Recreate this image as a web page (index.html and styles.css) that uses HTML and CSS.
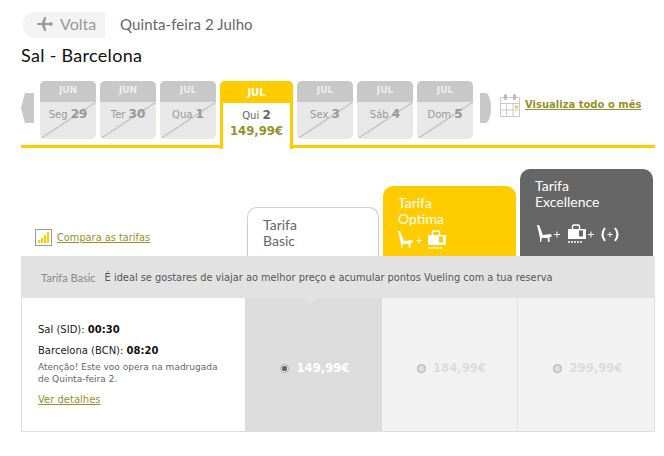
FILE: index.html
```html
<!DOCTYPE html>
<html lang="en">
<head>
    <meta charset="UTF-8">
    <meta name="viewport" content="width=device-width, initial-scale=1.0">
    <title>Sal - Barcelona</title>
    <link rel="stylesheet" href="styles.css">
</head>
<body>

<div class="top-row">
    <a class="back-btn">
        <svg class="plane" width="17" height="16" viewBox="0 0 19 16"><path d="M0 8 L2 5.5 L4 7 L9 7 L7.5 0.5 L10 0.5 L12.5 7 L17 7 Q19 8 17 9 L12.5 9 L10 15.5 L7.5 15.5 L9 9 L4 9 L2 10.5 Z" transform="rotate(180 9.5 8)" fill="#999"/></svg>
        <span>Volta</span>
    </a>
    <span class="top-date">Quinta-feira 2 Julho</span>
</div>

<h1 class="route">Sal - Barcelona</h1>

<div class="date-strip">
    <div class="arrow-left"></div>
    <div class="day"><div class="day-month">JUN</div><div class="day-body">Seg <b>29</b></div></div>
    <div class="day"><div class="day-month">JUN</div><div class="day-body">Ter <b>30</b></div></div>
    <div class="day"><div class="day-month">JUL</div><div class="day-body">Qua <b>1</b></div></div>
    <div class="day-active">
        <div class="day-active-month">JUL</div>
        <div class="day-active-body">Qui <b>2</b><div class="day-price">149,99€</div></div>
    </div>
    <div class="day"><div class="day-month">JUL</div><div class="day-body">Sex <b>3</b></div></div>
    <div class="day"><div class="day-month">JUL</div><div class="day-body">Sáb <b>4</b></div></div>
    <div class="day"><div class="day-month">JUL</div><div class="day-body">Dom <b>5</b></div></div>
    <div class="arrow-right"></div>
    <svg class="cal-icon" width="20" height="24" viewBox="0 0 20 24">
        <path d="M0.5 4.5H19.5V23.5H0.5ZM0.5 10.5H19.5M0.5 17H19.5M6.5 10.5V23.5M13 10.5V23.5" fill="none" stroke="#c9c9c9"/>
        <rect x="4" y="1" width="3" height="6" rx="1.5" fill="#bbb"/>
        <rect x="13" y="1" width="3" height="6" rx="1.5" fill="#bbb"/>
        <rect x="15" y="12.5" width="3" height="3" fill="#e3cf3a"/>
    </svg>
    <a class="month-link">Visualiza todo o mês</a>
</div>

<div class="fare-tabs">
    <a class="compare">
        <svg width="17" height="17" viewBox="0 0 17 17">
            <rect x="0.5" y="0.5" width="16" height="16" fill="#fff" stroke="#999"/>
            <path d="M3 11h2v3H3zM6 9h2v5H6zM9 6h2v8H9zM12 3h2v11h-2z" fill="#fc0"/>
        </svg>
        <span>Compara as tarifas</span>
    </a>
    <div class="fare-tab tab-basic">Tarifa<br>Basic</div>
    <div class="fare-tab tab-optima">
        Tarifa<br>Optima
        <div class="tab-icons">
            <svg width="56" height="20" viewBox="0 0 56 20">
                <use href="#seat"/>
                <path d="M18 10.5h6M21 7.5v6" stroke="#fff"/>
                <use href="#bag" x="29"/>
            </svg>
        </div>
    </div>
    <div class="fare-tab tab-excellence">
        Tarifa<br>Excellence
        <div class="tab-icons">
            <svg width="88" height="20" viewBox="0 0 88 20">
                <use href="#seat"/>
                <path d="M17 10.5h6M20 7.5v6" stroke="#fff"/>
                <use href="#bag" x="30"/>
                <path d="M51 10.5h6M54 7.5v6" stroke="#fff"/>
                <path d="M68 4 Q63 10.5 68 17M78 4 Q83 10.5 78 17" fill="none" stroke="#fff" stroke-width="2"/>
                <path d="M70.5 10.5h5M73 8v5" stroke="#fff"/>
            </svg>
        </div>
    </div>
</div>

<div class="info-bar">
    <span class="info-name">Tarifa Basic</span>
    <span class="info-text">É ideal se gostares de viajar ao melhor preço e acumular pontos Vueling com a tua reserva</span>
</div>

<div class="flight-row">
    <div class="flight-info">
        <p class="flight-time">Sal (SID)<span class="colon">:</span> <b>00:30</b></p>
        <p class="flight-time flight-time-last">Barcelona (BCN)<span class="colon">:</span> <b>08:20</b></p>
        <p class="flight-note">Atenção! Este voo opera na madrugada<br>de Quinta-feira 2.</p>
        <a class="details">Ver detalhes</a>
    </div>
    <div class="price-cell cell-selected">
        <span class="radio radio-on"></span><span class="price">149,99€</span>
    </div>
    <div class="price-cell">
        <span class="radio"></span><span class="price">184,99€</span>
    </div>
    <div class="price-cell cell-last">
        <span class="radio"></span><span class="price">299,99€</span>
    </div>
</div>

<svg width="0" height="0" class="icon-defs">
    <defs>
        <g id="seat"><path d="M0 1 L2 1 L6 11 L14 10 L15 12.5 L12.5 13 L12.5 18 L11 18 L10.5 14 L5 14 L4 18 L3 18 L3 14 Z" fill="#fff"/></g>
        <g id="bag">
            <path d="M5.5 5 V2.5 Q5.5 1 7 1 H11 Q12.5 1 12.5 2.5 V5" fill="none" stroke="#fff" stroke-width="1.5"/>
            <rect x="1" y="5" width="18" height="10" fill="#fff"/>
            <rect x="12" y="6.5" width="4" height="6" fill="currentColor"/>
            <path d="M1 18h2M4 18h2M7 18h2M10 18h2M13 18h2" stroke="#fff" stroke-width="1.5"/>
        </g>
    </defs>
</svg>

</body>
</html>
```

FILE: styles.css
```css
body {
    margin: 0;
    padding: 12px 9px 0 21px;
    font-family: 'DejaVu Sans', Verdana, sans-serif;
    background-color: #fff;
    color: #333;
    width: 634px;
}

.top-row {
    display: flex;
    align-items: center;
    height: 26px;
}

.back-btn {
    display: flex;
    align-items: center;
    gap: 7px;
    width: 82px;
    height: 26px;
    margin-left: 2px;
    padding: 0 0 3px 13px;
    box-sizing: border-box;
    background-color: #f3f3f3;
    border-radius: 12px 0 0 12px;
    font-family: 'Lato', sans-serif;
    font-size: 16px;
    color: #999;
}

.top-date {
    margin: 0 0 3px 15px;
    font-family: 'Lato', sans-serif;
    font-size: 15px;
    letter-spacing: 0.1px;
    color: #666;
}

.route {
    margin: 5px 0 0;
    height: 24px;
    font-family: 'Lato', sans-serif;
    font-size: 18px;
    letter-spacing: 0.3px;
    line-height: 24px;
    font-weight: 400;
    color: #111;
}

.date-strip {
    display: flex;
    align-items: flex-start;
    gap: 4px;
    height: 64px;
    margin-top: 14px;
    border-bottom: 3px solid #fc0;
}

.arrow-left {
    width: 13px;
    height: 30px;
    margin: 12px 2px 0 0;
    background-color: #c8c8c8;
    clip-path: polygon(0 50%, 30% 0, 100% 0, 100% 100%, 30% 100%);
}

.arrow-right {
    width: 11px;
    height: 30px;
    margin: 12px 5px 0 3px;
    background-color: #c8c8c8;
    border-radius: 0 50% 50% 0 / 0 50% 50% 0;
}

.day {
    width: 56px;
    height: 58px;
    border-radius: 5px;
    overflow: hidden;
    background-color: #e8e8e8;
    text-align: center;
}

.day-month {
    height: 21px;
    background-color: #c8c8c8;
    color: #eee;
    font-size: 9px;
    font-weight: bold;
    line-height: 19px;
}

.day-body {
    height: 37px;
    padding-top: 5px;
    box-sizing: border-box;
    font-size: 10px;
    color: #999;
    background: linear-gradient(to bottom right, transparent 48.5%, #ccc 48.5%, #ccc 51.5%, transparent 51.5%);
}

.day-body b {
    font-size: 12px;
}

.day-active {
    width: 73px;
    height: 68px;
    box-sizing: border-box;
    border: 3px solid #fc0;
    border-top: 0;
    border-bottom: 0;
    border-radius: 5px 5px 0 0;
    background-color: #fff;
    text-align: center;
}

.day-active-month {
    height: 22px;
    margin: 0 -3px;
    background-color: #fc0;
    border-radius: 5px 5px 0 0;
    color: #fff;
    font-size: 10px;
    font-weight: bold;
    line-height: 24px;
}

.day-active-body {
    padding-top: 5px;
    font-size: 10px;
    color: #666;
}

.day-active-body b {
    font-size: 12px;
}

.day-price {
    margin-top: 2px;
    font-size: 11.7px;
    font-weight: bold;
    color: #96912a;
    line-height: 14px;
}

.cal-icon {
    margin-top: 12px;
}

.month-link {
    margin: 18px 0 0 1px;
    font-size: 10px;
    font-weight: bold;
    color: #96912a;
    text-decoration: underline;
    white-space: nowrap;
}

.fare-tabs {
    display: flex;
    align-items: flex-end;
    gap: 4px;
    height: 87px;
    margin-top: 21px;
}

.compare {
    display: flex;
    align-items: center;
    gap: 5px;
    width: 222px;
    margin: 0 0 10px 0;
    padding-left: 14px;
    box-sizing: border-box;
    font-size: 9.8px;
    color: #96912a;
}

.compare span {
    text-decoration: underline;
}

.fare-tab {
    width: 133px;
    box-sizing: border-box;
    padding: 9px 15px 0;
    border-radius: 10px 10px 0 0;
    font-family: 'Lato', sans-serif;
    font-size: 14px;
    line-height: 16px;
}

.tab-basic {
    width: 132px;
    height: 49px;
    border: 1px solid #ccc;
    border-bottom: 0;
    color: #666;
}

.tab-optima {
    height: 70px;
    background-color: #fc0;
    color: #fff;
}

.tab-excellence {
    height: 87px;
    background-color: #666;
    color: #fff;
}

.tab-icons {
    margin-top: 3px;
    color: #fc0;
}

.tab-excellence .tab-icons {
    margin: 14px 0 0 2px;
    color: #666;
}

.info-bar {
    display: flex;
    align-items: center;
    gap: 9px;
    height: 42px;
    padding-left: 20px;
    background-color: #e2e2e2;
}

.info-name {
    font-family: 'Lato', sans-serif;
    font-size: 11px;
    color: #888;
}

.info-text {
    font-size: 9.8px;
    color: #555;
    white-space: nowrap;
}

.flight-row {
    display: flex;
    height: 134px;
    box-sizing: border-box;
    border: 1px solid #ddd;
    border-top: 0;
}

.flight-info {
    width: 223px;
    box-sizing: border-box;
    padding: 26px 0 0 16px;
    font-size: 10px;
}

.flight-time {
    margin: 0 0 9px;
    line-height: 12px;
    color: #222;
}

.flight-time-last {
    margin-bottom: 4px;
}

.flight-time b {
    color: #111;
}

.flight-note {
    margin: 0 0 9px;
    font-size: 9px;
    line-height: 12px;
    color: #666;
}

.details {
    color: #96912a;
    text-decoration: underline;
}

.price-cell {
    display: flex;
    align-items: center;
    justify-content: center;
    gap: 7px;
    width: 136px;
    padding: 7px 0 0 4px;
    box-sizing: border-box;
    background-color: #f2f2f2;
    border-right: 1px solid #e2e2e2;
}

.cell-last {
    border-right: 0;
}

.cell-selected {
    position: relative;
    width: 137px;
    padding-left: 3px;
    background-color: #dcdcdc;
    border-right: 0;
}

/* little notch under the info bar */
.cell-selected::before {
    content: '';
    position: absolute;
    top: 0;
    left: 57px;
    border: 8px solid transparent;
    border-top: 6px solid #e2e2e2;
    border-bottom: 0;
}

.radio {
    width: 9px;
    height: 9px;
    box-sizing: border-box;
    border: 1px solid #aaa;
    border-radius: 50%;
    background-color: #ddd;
}

.radio-on {
    background: radial-gradient(circle, #666 0, #666 2.5px, #f2f2f2 3px);
}

.price {
    font-size: 11.7px;
    font-weight: bold;
    color: #dcdcdc;
}

.cell-selected .price {
    color: #fff;
}

.icon-defs {
    position: absolute;
}
```
